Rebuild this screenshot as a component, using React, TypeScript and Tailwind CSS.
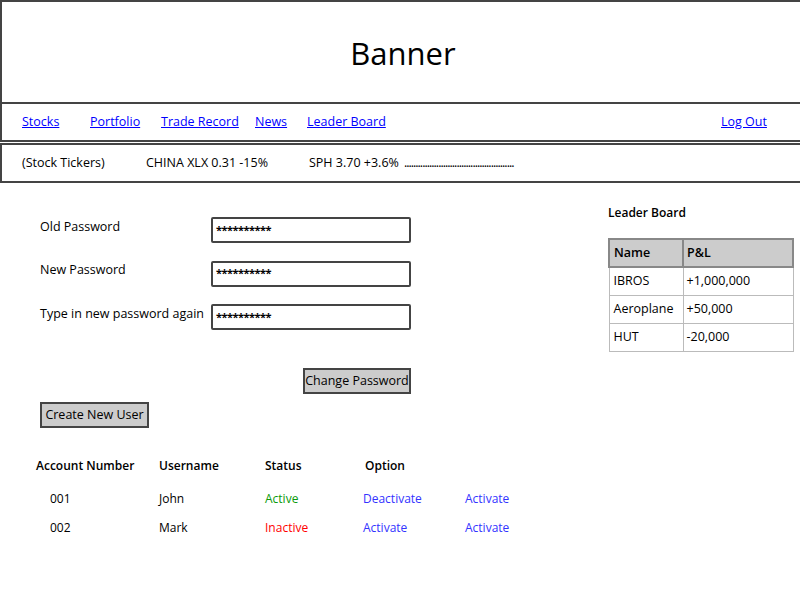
const FONT = "font-['Comic_Sans_MS','Open_Sans',sans-serif]";

const NAV = [
  { label: "Stocks", w: "w-[68px]" },
  { label: "Portfolio", w: "w-[71px]" },
  { label: "Trade Record", w: "w-[94px]" },
  { label: "News", w: "w-[52px]" },
  { label: "Leader Board", w: "w-[100px]" },
];

const LEADERS = [
  { name: "IBROS", pl: "+1,000,000" },
  { name: "Aeroplane", pl: "+50,000" },
  { name: "HUT", pl: "-20,000" },
];

const ACCOUNTS = [
  { num: "001", user: "John", status: "Active", color: "text-[#0a9a0a]", opt: "Deactivate" },
  { num: "002", user: "Mark", status: "Inactive", color: "text-[#ff0000]", opt: "Activate" },
];

function PasswordRow({ label }: { label: string }) {
  return (
    <div className="flex items-center h-[26px]">
      <span className="w-[171px] text-[12.5px] -mt-[6px]">{label}</span>
      <div className="w-[200px] h-[26px] border-2 border-[#444] rounded-[2px] flex items-center pl-[3px] text-[11px] font-bold tracking-[-0.5px]">
        **********
      </div>
    </div>
  );
}

export default function App() {
  return (
    <div className={`w-[800px] h-[600px] overflow-hidden bg-white text-black ${FONT}`}>
      {/* Banner */}
      <div className="w-[806px] h-[104px] border-2 border-[#444] flex items-center justify-center">
        <span className="text-[31px] font-medium mt-[2px]">Banner</span>
      </div>

      {/* Nav */}
      <div className="w-[806px] h-[40px] -mt-[2px] border-2 border-[#444] flex items-center pl-[20px] text-[12.5px] text-[#0000ff] whitespace-nowrap">
        {NAV.map(n => (
          <a key={n.label} className={`${n.w} underline`} href="#">{n.label}</a>
        ))}
        <a className="ml-[314px] underline" href="#">Log Out</a>
      </div>

      {/* Tickers */}
      <div className="w-[806px] h-[40px] mt-[1px] border-2 border-[#444] flex items-center pl-[20px] text-[12.5px] whitespace-nowrap">
        <span className="w-[124px]">(Stock Tickers)</span>
        <span className="w-[163px]">CHINA XLX 0.31 -15%</span>
        <span>SPH 3.70 +3.6%</span>
        <span className="ml-[5px] tracking-[-1px]">................................................</span>
      </div>

      {/* Main */}
      <div className="flex">
        <div className="w-[590px] pl-[40px] pt-[34px]">
          <div className="flex flex-col gap-[17.5px]">
            <PasswordRow label="Old Password" />
            <PasswordRow label="New Password" />
            <PasswordRow label="Type in new password again" />
          </div>
          <div className="w-[371px] flex justify-end mt-[38px]">
            <button className="w-[108px] h-[26px] bg-[#cccccc] border-2 border-[#444] text-[12.5px] pt-[1px]">Change Password</button>
          </div>
          <button className="mt-[8px] w-[109px] h-[26px] bg-[#cccccc] border-2 border-[#444] text-[12.5px] pt-[1px]">Create New User</button>

          <div className="-ml-[4px] mt-[28px] text-[12px]">
            <div className="flex font-semibold h-[20px] items-center">
              <span className="w-[123px]">Account Number</span>
              <span className="w-[106px]">Username</span>
              <span className="w-[100px]">Status</span>
              <span>Option</span>
            </div>
            <div className="mt-[3px]">
              {ACCOUNTS.map(a => (
                <div key={a.num} className="flex h-[29px] items-end">
                  <span className="w-[123px] pl-[14px]">{a.num}</span>
                  <span className="w-[106px]">{a.user}</span>
                  <span className={`w-[98px] ${a.color}`}>{a.status}</span>
                  <span className="w-[102px] text-[#3333ff]">{a.opt}</span>
                  <span className="text-[#3333ff]">Activate</span>
                </div>
              ))}
            </div>
          </div>
        </div>

        {/* Leader board */}
        <div className="pl-[18px] pt-[21px]">
          <div className="text-[12px] font-semibold h-[16px]">Leader Board</div>
          <table className="mt-[18px] w-[186px] border-collapse text-[12.5px]">
            <thead>
              <tr className="bg-[#cccccc] h-[28px]">
                <th className="w-[74px] border-2 border-[#888] text-left font-semibold pl-[4px]">Name</th>
                <th className="border-2 border-[#888] text-left font-semibold pl-[3px]">P&amp;L</th>
              </tr>
            </thead>
            <tbody>
              {LEADERS.map(l => (
                <tr key={l.name} className="h-[28px]">
                  <td className="border border-[#bbb] pl-[4px]">{l.name}</td>
                  <td className="border border-[#bbb] pl-[3px]">{l.pl}</td>
                </tr>
              ))}
            </tbody>
          </table>
        </div>
      </div>
    </div>
  );
}
